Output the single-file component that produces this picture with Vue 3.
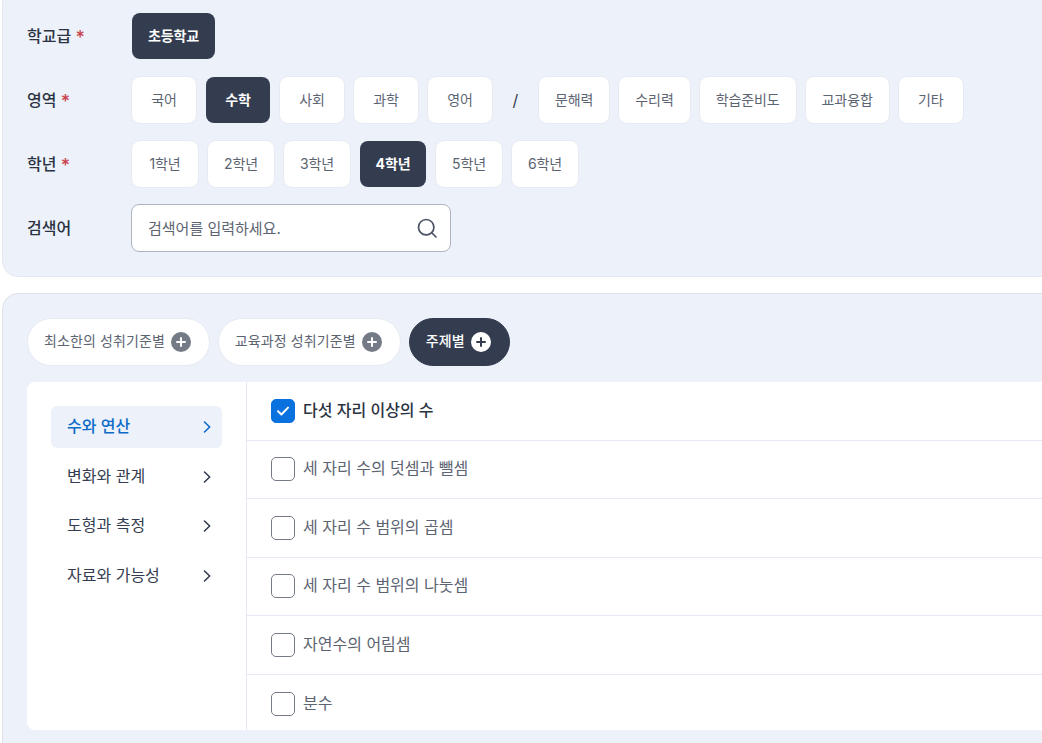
<template>
  <div class="page">
    <section class="filter-panel">
      <div class="filter-row">
        <span class="filter-label">학교급 <i class="req">*</i></span>
        <div class="chips">
          <button class="chip active">초등학교</button>
        </div>
      </div>
      <div class="filter-row">
        <span class="filter-label">영역 <i class="req">*</i></span>
        <div class="chips">
          <button v-for="s in subjects" :key="s" class="chip" :class="{ active: s === '수학' }">{{ s }}</button>
          <span class="slash">/</span>
          <button v-for="s in subjects2" :key="s" class="chip">{{ s }}</button>
        </div>
      </div>
      <div class="filter-row">
        <span class="filter-label">학년 <i class="req">*</i></span>
        <div class="chips">
          <button v-for="g in grades" :key="g" class="chip grade" :class="{ active: g === '4학년' }">{{ g }}</button>
        </div>
      </div>
      <div class="filter-row">
        <span class="filter-label">검색어</span>
        <div class="search">
          <input class="search-input" type="text" placeholder="검색어를 입력하세요." />
          <svg class="search-icon" width="24" height="24" viewBox="0 0 24 24" fill="none" stroke="#4a5263" stroke-width="1.7" stroke-linecap="round">
            <circle cx="11.2" cy="11.2" r="7.7" />
            <path d="M17 17l4 4" />
          </svg>
        </div>
      </div>
    </section>

    <section class="topic-panel">
      <div class="tabs">
        <button v-for="t in tabs" :key="t" class="tab" :class="{ active: t === '주제별' }">
          <span class="txt">{{ t }}</span>
          <span class="plus"></span>
        </button>
      </div>
      <div class="topic-body">
        <ul class="side-menu">
          <li v-for="(m, i) in menus" :key="m" class="side-item" :class="{ active: i === 0 }">
            <span class="txt">{{ m }}</span>
            <svg width="10" height="14" viewBox="0 0 10 14" fill="none" stroke="currentColor" stroke-width="1.6" stroke-linecap="round" stroke-linejoin="round">
              <path d="M2.5 2l5.2 5-5.2 5" />
            </svg>
          </li>
        </ul>
        <ul class="topic-list">
          <li v-for="(item, i) in topics" :key="item" class="topic-row" :class="{ checked: i === 0 }">
            <span class="check">
              <svg v-if="i === 0" width="14" height="12" viewBox="0 0 14 12" fill="none" stroke="#fff" stroke-width="2" stroke-linecap="round" stroke-linejoin="round">
                <path d="M2 6.2l3.4 3.3L12 2.6" />
              </svg>
            </span>
            <span class="txt">{{ item }}</span>
          </li>
        </ul>
      </div>
    </section>
  </div>
</template>

<script setup>
const subjects = ['국어', '수학', '사회', '과학', '영어']
const subjects2 = ['문해력', '수리력', '학습준비도', '교과융합', '기타']
const grades = ['1학년', '2학년', '3학년', '4학년', '5학년', '6학년']
const tabs = ['최소한의 성취기준별', '교육과정 성취기준별', '주제별']
const menus = ['수와 연산', '변화와 관계', '도형과 측정', '자료와 가능성']
const topics = [
  '다섯 자리 이상의 수',
  '세 자리 수의 덧셈과 뺄셈',
  '세 자리 수 범위의 곱셈',
  '세 자리 수 범위의 나눗셈',
  '자연수의 어림셈',
  '분수'
]
</script>

<style>
html, body {
  margin: 0;
  overflow: hidden;
  background: #fff;
}
</style>

<style scoped>
.page {
  width: 1042px;
  height: 743px;
  overflow: hidden;
  padding-left: 2px;
  box-sizing: border-box;
  font-family: Inter, "Noto Sans CJK KR", sans-serif;
  color: #343d50;
}
button {
  font-family: inherit;
}
.txt {
  margin-bottom: 4px;
}
.filter-panel {
  width: 1100px;
  box-sizing: border-box;
  margin-top: -13px;
  padding: 24px;
  display: flex;
  flex-direction: column;
  gap: 16px;
  background: #ecf1fa;
  border: 1px solid #e4e8f0;
  border-radius: 16px;
}
.filter-row {
  display: flex;
  align-items: center;
}
.filter-label {
  width: 104px;
  flex: none;
  font-size: 16px;
  line-height: 20px;
  font-weight: 500;
  color: #2b3342;
  white-space: nowrap;
}
.req {
  font-style: normal;
  font-weight: 500;
  color: #c8444f;
  font-size: 18px;
  line-height: 1;
  vertical-align: -2px;
}
.chips {
  display: flex;
  align-items: center;
  gap: 8px;
}
.chip {
  height: 48px;
  min-width: 66px;
  padding: 0 16px 2px;
  box-sizing: border-box;
  font-size: 14px;
  letter-spacing: -0.1px;
  color: #5c6472;
  background: #fff;
  border: 1px solid #e6eaf2;
  border-radius: 9px;
}
.chip.grade {
  width: 68px;
  padding: 0 0 2px;
}
.chip.active {
  background: #343d50;
  background-clip: padding-box;
  border-color: transparent;
  color: #fff;
  font-weight: 700;
}
.slash {
  width: 29px;
  text-align: center;
  font-size: 16px;
  color: #343d50;
}
.search {
  position: relative;
  width: 320px;
}
.search-input {
  display: block;
  width: 100%;
  height: 48px;
  box-sizing: border-box;
  padding: 0 48px 0 16px;
  font-family: inherit;
  font-size: 15px;
  color: #343d50;
  background: #fff;
  border: 1px solid #aeb4bf;
  border-radius: 8px;
  outline: none;
}
.search-input::placeholder {
  color: #5c6472;
  opacity: 1;
}
.search-icon {
  position: absolute;
  right: 12px;
  top: 12px;
}
.topic-panel {
  width: 1100px;
  height: 470px;
  box-sizing: border-box;
  margin-top: 16px;
  padding: 24px 24px 0;
  background: #edf1f9;
  border: 1px solid #dfe2e8;
  border-radius: 16px;
}
.tabs {
  display: flex;
  gap: 8px;
  height: 48px;
  margin-bottom: 16px;
}
.tab {
  display: flex;
  align-items: center;
  gap: 6px;
  padding: 0 18px 0 16px;
  font-size: 14px;
  letter-spacing: 0.1px;
  color: #5c6472;
  background: #fff;
  border: 1px solid #e6eaf2;
  border-radius: 24px;
}
.tab.active {
  background: #343d50;
  border-color: #343d50;
  color: #fff;
  font-weight: 500;
}
.plus {
  position: relative;
  width: 20px;
  height: 20px;
  border-radius: 50%;
  background: #757b86;
}
.plus::before,
.plus::after {
  content: "";
  position: absolute;
  left: 50%;
  top: 50%;
  background: #fff;
  border-radius: 1px;
}
.plus::before {
  width: 10px;
  height: 2px;
  margin: -1px 0 0 -5px;
}
.plus::after {
  width: 2px;
  height: 10px;
  margin: -5px 0 0 -1px;
}
.tab.active .plus {
  background: #fff;
}
.tab.active .plus::before,
.tab.active .plus::after {
  background: #343d50;
}
.topic-body {
  display: flex;
  height: 348px;
  background: #fff;
  border-radius: 8px;
  overflow: hidden;
}
.side-menu {
  list-style: none;
  margin: 0;
  width: 220px;
  box-sizing: border-box;
  padding: 24px 24px 0;
  display: flex;
  flex-direction: column;
  gap: 7.6px;
  border-right: 1px solid #e4e9f3;
}
.side-item {
  height: 42px;
  display: flex;
  align-items: center;
  justify-content: space-between;
  padding: 0 10px 0 16px;
  font-size: 16px;
  color: #343d50;
  border-radius: 6px;
}
.side-item.active {
  background: #ecf1fa;
  color: #0b6bc7;
  font-weight: 500;
}
.topic-list {
  list-style: none;
  margin: 0;
  padding: 0;
  flex: 1;
}
.topic-row {
  height: 58.5px;
  box-sizing: border-box;
  display: flex;
  align-items: center;
  gap: 8px;
  padding-left: 24px;
  font-size: 16px;
  color: #5c6472;
  border-bottom: 1px solid #e4e9f3;
}
.topic-row:last-child {
  border-bottom: 0;
}
.topic-row.checked {
  color: #2b3342;
  font-weight: 500;
}
.check {
  width: 24px;
  height: 24px;
  box-sizing: border-box;
  display: flex;
  align-items: center;
  justify-content: center;
  background: #fff;
  border: 1px solid #757b86;
  border-radius: 5px;
}
.topic-row.checked .check {
  background: #0a72de;
  border-color: #0a72de;
}
</style>
